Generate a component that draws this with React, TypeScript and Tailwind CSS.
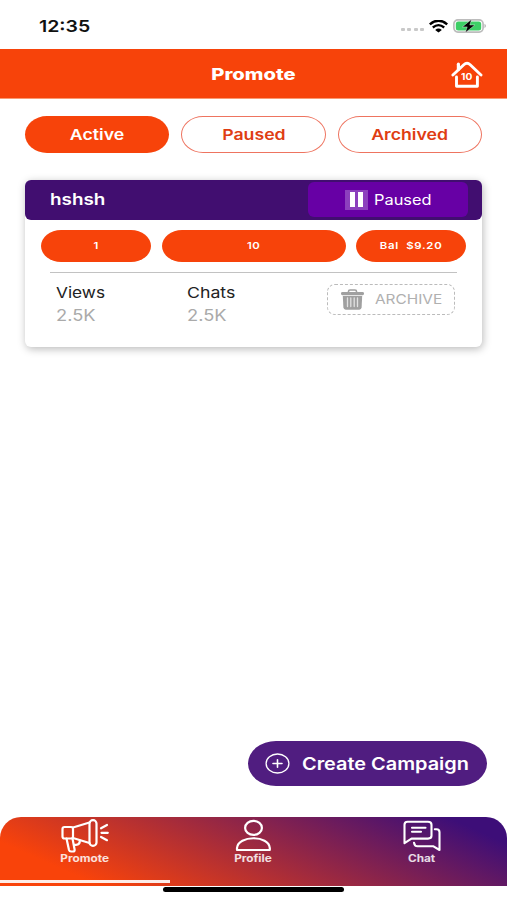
import type { ReactNode } from 'react';

interface LabelProps {
  children: ReactNode;
  className?: string;
}

// Wide lettering used all over the app
function Label({ children, className = '' }: LabelProps) {
  return <span className={`inline-block whitespace-pre leading-none ${className}`}>{children}</span>;
}

function StatusBar() {
  return (
    <div className="flex h-[49px] items-start justify-between pl-[39px] pr-[20px] pt-[18px] text-[#111]">
      <Label className="origin-left scale-x-[1.18] text-[16.5px] font-semibold">12:35</Label>
      <div className="mt-px flex items-center">
        <div className="mt-[7px] flex gap-[2.5px]">
          <i className="h-[3.5px] w-[4px] rounded-[1px] bg-[#c9c9c9]" />
          <i className="h-[3.5px] w-[4px] rounded-[1px] bg-[#c9c9c9]" />
          <i className="h-[3.5px] w-[4px] rounded-[1px] bg-[#c9c9c9]" />
          <i className="h-[3.5px] w-[4px] rounded-[1px] bg-[#c9c9c9]" />
        </div>
        <svg className="ml-[5px]" width="19" height="13" viewBox="0 0 19 13" fill="none">
          <path d="M0.8 4.4 Q9.5 -3 18.2 4.4" stroke="#000" strokeWidth="2.5" />
          <path d="M3.8 7.5 Q9.5 2.7 15.2 7.5" stroke="#000" strokeWidth="2.3" />
          <path d="M6.2 9.9 Q9.5 7 12.8 9.9 L9.5 12.5Z" fill="#000" />
        </svg>
        <svg className="ml-[5px]" width="34" height="14" viewBox="0 0 34 14" fill="none">
          <rect x="0.9" y="0.9" width="29.2" height="12.2" rx="4" stroke="#bcbcbc" strokeWidth="1.7" />
          <rect x="2.8" y="2.5" width="25.4" height="9" rx="2.5" fill="#3dcf66" />
          <path d="M31.6 4.8 Q33.8 7 31.6 9.2Z" fill="#999" />
          <path d="M18.6 0.3 L9.4 7.9 H14.2 L12.3 13.7 L21.8 6 H16.8Z" fill="#000" stroke="#fff" strokeWidth="0.4" />
        </svg>
      </div>
    </div>
  );
}

function Header() {
  return (
    <header className="grid h-[50px] grid-cols-[1fr_auto_1fr] items-center border-b border-[#f99a72] bg-[#f7430a] text-white">
      <span />
      <Label className="scale-x-[1.26] text-[16px] font-extrabold">Promote</Label>
      <div className="relative mr-[24px] mt-[2px] justify-self-end">
        <svg width="32" height="28" viewBox="0 0 32 28" fill="none" stroke="#fff" strokeLinejoin="round" strokeLinecap="round">
          <path d="M1.9 14 L12.8 3.8 Q16 0.9 19.2 3.8 L30 14" strokeWidth="2.9" />
          <path d="M7.4 8.5 V3.2" strokeWidth="3.2" />
          <path d="M5.5 16 V25.2 H26.4 V16" strokeWidth="2.9" />
        </svg>
        <Label className="absolute left-[11px] top-[12px] scale-x-[1.2] text-[8.5px] font-bold">10</Label>
      </div>
    </header>
  );
}

function Tabs() {
  const outline = 'border border-[#ee7460] text-[#df3d13]';
  return (
    <div className="mx-[25px] mt-[17px] grid h-[37px] grid-cols-3 gap-[12px] text-[15px] font-semibold">
      <button className="rounded-[22px/18.5px] bg-[#f7430a] pt-[2px] text-white">
        <Label className="scale-x-[1.18]">Active</Label>
      </button>
      <button className={`rounded-[22px/18.5px] pt-[2px] ${outline}`}>
        <Label className="scale-x-[1.18]">Paused</Label>
      </button>
      <button className={`rounded-[22px/18.5px] pt-[2px] ${outline}`}>
        <Label className="scale-x-[1.18]">Archived</Label>
      </button>
    </div>
  );
}

function TrashIcon() {
  return (
    <svg width="23" height="21" viewBox="0 0 23 21" fill="none">
      <path d="M7.5 4 V2.5 Q7.5 1 9 1 H14 Q15.5 1 15.5 2.5 V4" stroke="#a0a0a0" strokeWidth="1.6" />
      <rect x="0" y="3" width="23" height="3.2" rx="1.4" fill="#a0a0a0" />
      <path d="M1.8 7 H21.2 L20.6 18.6 Q20.3 20.7 18.3 20.7 H4.7 Q2.7 20.7 2.4 18.6Z" fill="#a0a0a0" />
      <path d="M6.5 9 V17.5 M9.8 9 V17.5 M13.2 9 V17.5 M16.5 9 V17.5" stroke="#e2e2e2" strokeWidth="1.3" strokeLinecap="round" />
    </svg>
  );
}

function CampaignCard() {
  return (
    <section className="mx-[25px] mt-[27px] h-[167px] rounded-[6px] bg-white shadow-[1px_2px_9px_rgba(0,0,0,0.28)]">
      <div className="flex h-[39.5px] items-center justify-between rounded-[6px] bg-[#410e70] pl-[25px] pr-[14px] text-white">
        <Label className="-mt-[2px] origin-left scale-x-[1.18] text-[16px] font-semibold">hshsh</Label>
        <button className="flex h-[35px] w-[160px] items-center rounded-[6px] bg-[#6700a5] pl-[37px]">
          <span className="flex h-[20px] w-[23px] items-center justify-center gap-[3px] bg-[#8c40bd]">
            <i className="h-[15px] w-[5px] bg-white" />
            <i className="h-[15px] w-[5px] bg-white" />
          </span>
          <Label className="ml-[6px] origin-left scale-x-[1.17] text-[14px]">Paused</Label>
        </button>
      </div>

      <div className="mt-[10px] flex h-[32px] justify-between pl-[16px] pr-[16px] text-[9.5px] font-semibold text-white">
        <div className="flex w-[110px] items-center justify-center rounded-[20px/16px] bg-[#f7430a]">
          <Label className="scale-x-[1.2]">1</Label>
        </div>
        <div className="flex w-[184px] items-center justify-center rounded-[20px/16px] bg-[#f7430a]">
          <Label className="scale-x-[1.2] tracking-[0.4px]">10</Label>
        </div>
        <div className="flex w-[110px] items-center justify-center rounded-[20px/16px] bg-[#f7430a]">
          <Label className="scale-x-[1.2] tracking-[0.6px]">Bal  $9.20</Label>
        </div>
      </div>

      <div className="mx-[25px] mt-[10px] h-[1.5px] bg-[#c2c2c2]" />

      <div className="flex pl-[31px] pr-[27px]">
        <div className="flex w-[131px] flex-col pt-[12px]">
          <Label className="origin-left scale-x-[1.15] self-start text-[15px] text-[#222]">Views</Label>
          <Label className="mt-[8px] origin-left scale-x-[1.18] self-start text-[15.5px] text-[#aaa]">2.5K</Label>
        </div>
        <div className="flex flex-1 flex-col pt-[12px]">
          <Label className="origin-left scale-x-[1.18] self-start text-[15px] text-[#222]">Chats</Label>
          <Label className="mt-[8px] origin-left scale-x-[1.18] self-start text-[15.5px] text-[#aaa]">2.5K</Label>
        </div>
        <button className="mt-[11px] flex h-[31px] w-[128px] items-center rounded-[8px] border border-dashed border-[#bbb] pl-[13px]">
          <TrashIcon />
          <Label className="ml-[11px] origin-left scale-x-[1.14] text-[13.5px] text-[#b0b0b0]">ARCHIVE</Label>
        </button>
      </div>
    </section>
  );
}

function BottomNav() {
  return (
    <nav className="h-[69px] rounded-t-[21px] bg-[linear-gradient(24deg,#f9430a_15%,#3d0e78_91%)] text-[10px] font-bold text-white/85">
      <div className="flex h-[63px] justify-between">
        <div className="flex w-[170px] flex-col items-center pt-[2px]">
          <svg width="48" height="34" viewBox="0 0 48 34" fill="none" stroke="#fff" strokeWidth="2.2" strokeLinejoin="round" strokeLinecap="round">
            <rect x="1.5" y="8" width="10.5" height="11.5" rx="2" />
            <path d="M12 8.5 L28.5 3.5 M12 19 L28.5 24" />
            <rect x="28.5" y="1.2" width="7" height="25.6" rx="3.4" />
            <path d="M5.5 19.5 L8 31 Q8.5 32.5 10 32.5 H12 Q14 32.5 13.6 30.5 L11.5 19.5" />
            <path d="M13 25.8 H15 Q19 25.6 18.8 21.5" />
            <path d="M40 9.3 L46 6 M40.5 13.8 H46.8 M40 18 L46 21.2" />
          </svg>
          <Label className="scale-x-[1.18]">Promote</Label>
        </div>
        <div className="flex w-[167px] flex-col items-center pt-[2px]">
          <svg className="-ml-px" width="36" height="33" viewBox="0 0 36 33" fill="none" stroke="#fff" strokeWidth="2.2" strokeLinejoin="round">
            <ellipse cx="18.5" cy="8.9" rx="8.4" ry="7" />
            <path d="M2 31 V29 C3 16 34 16 34.8 29 V31Z" />
          </svg>
          <Label className="-ml-px mt-px scale-x-[1.18]">Profile</Label>
        </div>
        <div className="flex w-[170px] flex-col items-center pt-[2px]">
          <svg width="38" height="33" viewBox="0 0 38 33" fill="none" stroke="#fff" strokeWidth="2.1" strokeLinejoin="round" strokeLinecap="round">
            <path d="M4.5 2.8 H25 Q28.5 2.8 28.5 5.8 V16.8 Q28.5 19.6 25 19.6 H8.5 L1.5 24.2 V5.8 Q1.5 2.8 4.5 2.8Z" />
            <path d="M31.8 10.2 H33.5 Q36.5 10.2 36.5 13.2 V31 L30.5 27.3 H14.5 Q11.5 27.3 11 23.7" />
            <path d="M9 8.8 H22.5 M9 12.8 H18" />
          </svg>
          <Label className="mt-px scale-x-[1.18]">Chat</Label>
        </div>
      </div>
      <div className="h-[3px] w-[170px] bg-white/90" />
    </nav>
  );
}

export default function App() {
  return (
    <div className="flex h-[900px] w-[507px] flex-col overflow-hidden bg-white font-[Inter,sans-serif]">
      <StatusBar />
      <Header />
      <Tabs />
      <CampaignCard />
      <div className="flex flex-1 items-end justify-end pb-[31px] pr-[20px]">
        <button className="flex h-[45px] w-[239px] items-center rounded-[28px/22.5px] bg-[#501d80] pl-[17px] text-white">
          <svg width="25" height="21" viewBox="0 0 25 21" fill="none" stroke="#fff" strokeLinecap="round">
            <ellipse cx="12.5" cy="10.5" rx="11.4" ry="9.5" strokeWidth="1.3" />
            <path d="M8 10.5 H17 M12.5 6.8 V14.2" strokeWidth="1.6" />
          </svg>
          <Label className="ml-[12px] mt-px origin-left scale-x-[1.17] text-[17px] font-semibold">Create Campaign</Label>
        </button>
      </div>
      <BottomNav />
      <div className="flex h-[14px] justify-center pt-[1px]">
        <div className="h-[5px] w-[181px] rounded-full bg-black" />
      </div>
    </div>
  );
}
